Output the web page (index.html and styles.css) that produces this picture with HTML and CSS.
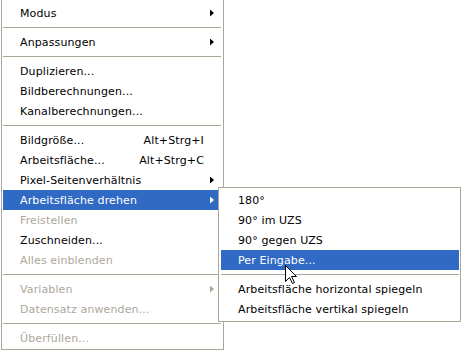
FILE: index.html
```html
<!DOCTYPE html>
<html>
<head>
    <title>Bild</title>
    <link rel="stylesheet" href="styles.css">
</head>
<body>

    <div class="menu main">
        <div class="item sub"><span class="label">Modus</span><span class="key"></span><span class="arrow"></span></div>
        <div class="sep"></div>
        <div class="item sub"><span class="label">Anpassungen</span><span class="key"></span><span class="arrow"></span></div>
        <div class="sep"></div>
        <div class="item"><span class="label">Duplizieren...</span></div>
        <div class="item"><span class="label">Bildberechnungen...</span></div>
        <div class="item"><span class="label">Kanalberechnungen...</span></div>
        <div class="sep"></div>
        <div class="item"><span class="label">Bildgröße...</span><span class="key">Alt+Strg+I</span></div>
        <div class="item"><span class="label">Arbeitsfläche...</span><span class="key">Alt+Strg+C</span></div>
        <div class="item sub"><span class="label">Pixel-Seitenverhältnis</span><span class="key"></span><span class="arrow"></span></div>
        <div class="item sub active open">
            <span class="label">Arbeitsfläche drehen</span><span class="key"></span><span class="arrow"></span>

            <div class="menu submenu">
                <div class="item"><span class="label">180°</span></div>
                <div class="item"><span class="label">90° im UZS</span></div>
                <div class="item"><span class="label">90° gegen UZS</span></div>
                <div class="item active"><span class="label">Per Eingabe...</span></div>
                <div class="sep"></div>
                <div class="item"><span class="label">Arbeitsfläche horizontal spiegeln</span></div>
                <div class="item"><span class="label">Arbeitsfläche vertikal spiegeln</span></div>
            </div>
        </div>
        <div class="item disabled"><span class="label">Freistellen</span></div>
        <div class="item"><span class="label">Zuschneiden...</span></div>
        <div class="item disabled"><span class="label">Alles einblenden</span></div>
        <div class="sep"></div>
        <div class="item sub disabled"><span class="label">Variablen</span><span class="key"></span><span class="arrow"></span></div>
        <div class="item disabled"><span class="label">Datensatz anwenden...</span></div>
        <div class="sep"></div>
        <div class="item disabled"><span class="label">Überfüllen...</span></div>
    </div>

    <!-- mouse pointer over "Per Eingabe..." -->
    <svg class="pointer" width="14" height="21" viewBox="0 0 14 21">
        <path d="M1.5 1.5 L1.5 17.5 L5.5 13.5 L8.5 19.5 L10.5 18.5 L7.5 12.5 L12.5 12.5 Z" fill="#fff" stroke="#000" stroke-width="1" stroke-linejoin="miter"/>
    </svg>

</body>
</html>
```

FILE: styles.css
```css
body {
    margin: 0;
    background: #fff;
    font-family: "DejaVu Sans", Verdana, sans-serif;
    font-size: 11px;
    letter-spacing: 0.12px;
    color: #000;
    position: relative;
    height: 351px;
    overflow: hidden;
}
.menu {
    background: #fff;
    border: 1px solid #aca899;
    box-sizing: border-box;
}
.main {
    width: 223px;
    margin-left: 1px;
    border-top: none;
    padding: 3px 2px 1px 1px;
}
.item {
    display: grid;
    grid-template-columns: 1fr auto 10px;
    align-items: center;
    height: 20px;
    line-height: 18px;
    padding: 0 7px 0 17px;
    white-space: nowrap;
}
.label, .key {
    padding-top: 2px;
}
.item.active {
    background: #316ac5;
    color: #fff;
}
.item.disabled {
    color: #aca899;
}
.key {
    text-align: right;
}
.arrow {
    justify-self: end;
}
.sub .arrow::after {
    content: "";
    display: block;
    width: 4px;
    height: 7px;
    background: currentColor;
    clip-path: polygon(0 0, 100% 50%, 0 100%);
}
.sep {
    height: 1px;
    margin: 4px 0;
    background: #aca899;
}
.open {
    position: relative;
}
.submenu {
    position: absolute;
    top: -3px;
    left: calc(100% - 3px);
    width: 243px;
    padding: 2px 1px 2px 2px;
    color: #000;
}
.pointer {
    position: absolute;
    left: 284px;
    top: 264px;
}
```
